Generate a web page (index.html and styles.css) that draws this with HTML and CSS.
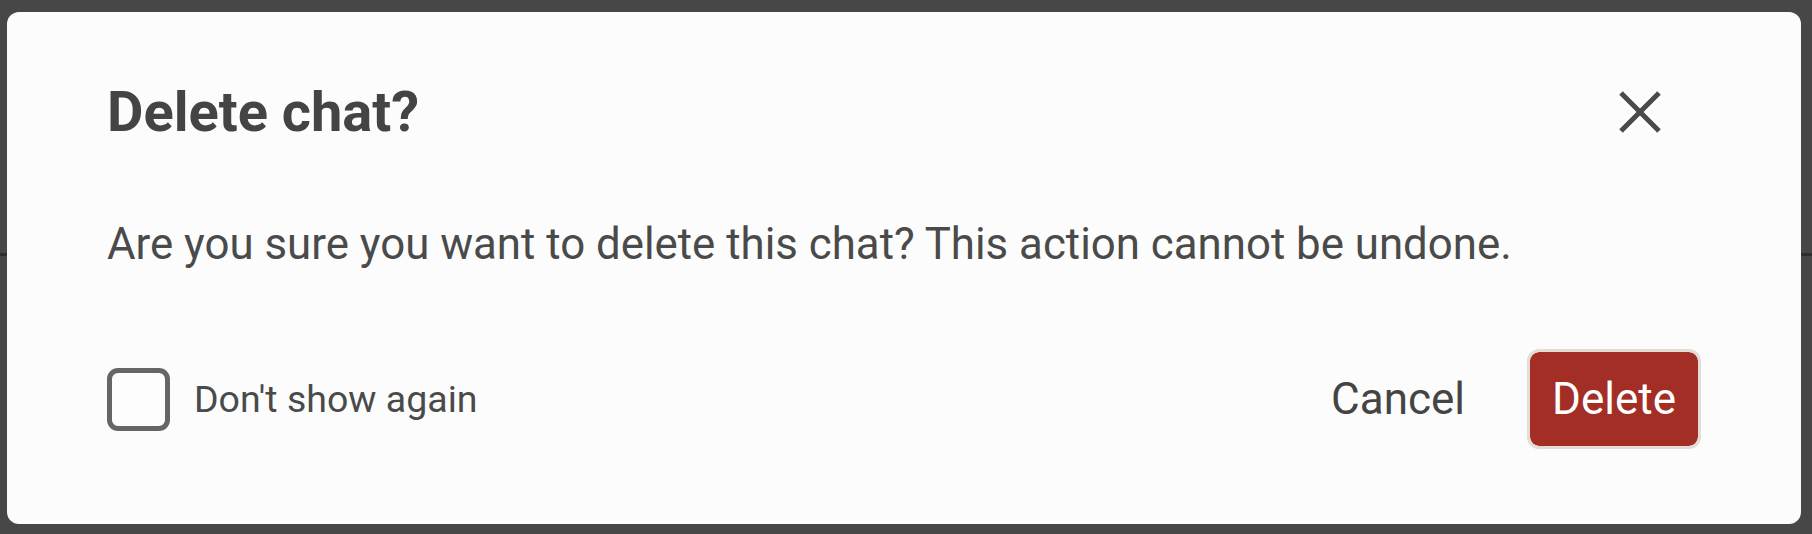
FILE: index.html
```html
<!DOCTYPE html>
<html lang="en">
<head>
<meta charset="utf-8">
<title>Delete chat?</title>
<link rel="stylesheet" href="styles.css">
</head>
<body>
<div class="page">
  <div class="page-top"></div>
</div>
<div class="overlay">
  <div class="dialog" role="dialog" aria-labelledby="dlg-title">
    <div class="dialog-header">
      <h2 class="dialog-title" id="dlg-title">Delete chat?</h2>
      <button class="close-btn" aria-label="Close">
        <svg width="44" height="44" viewBox="0 0 44 44" aria-hidden="true">
          <line x1="3" y1="3" x2="41" y2="41" stroke="#4a4a4a" stroke-width="5"/>
          <line x1="41" y1="3" x2="3" y2="41" stroke="#4a4a4a" stroke-width="5"/>
        </svg>
      </button>
    </div>
    <p class="dialog-text">Are you sure you want to delete this chat? This action cannot be undone.</p>
    <div class="dialog-footer">
      <label class="check">
        <span class="check-box"></span>
        <span class="check-label">Don't show again</span>
      </label>
      <div class="actions">
        <button class="btn-cancel">Cancel</button>
        <button class="btn-delete">Delete</button>
      </div>
    </div>
  </div>
</div>
</body>
</html>
```
FILE: styles.css
```css
html, body {
  margin: 0;
  padding: 0;
  height: 100%;
}
body {
  background: #474747;
  font-family: Roboto, "Liberation Sans", sans-serif;
  overflow: hidden;
}
.page-top {
  height: 253px;
  border-bottom: 3px solid #2e2e2e;
}
.overlay {
  position: fixed;
  inset: 0;
  padding: 12px 11px 10px 7px;
  display: flex;
}
.dialog {
  flex: 1;
  box-sizing: border-box;
  background: #fcfcfc;
  border-radius: 12px;
  padding: 0 100px;
  display: flex;
  flex-direction: column;
}
.dialog-header {
  margin-top: 60px;
  height: 80px;
  display: flex;
  align-items: center;
  justify-content: space-between;
}
.dialog-title {
  margin: 0;
  font-size: 56px;
  line-height: 80px;
  font-weight: 700;
  color: #444444;
}
.close-btn {
  border: 0;
  background: none;
  padding: 0;
  margin-right: 39px;
  width: 44px;
  height: 44px;
  display: flex;
}
.dialog-text {
  margin: 62px 0 0 0;
  font-size: 43.8px;
  line-height: 60px;
  color: #4a4a4a;
}
.dialog-footer {
  margin-top: 75px;
  height: 100px;
  display: flex;
  align-items: center;
  justify-content: space-between;
}
.check {
  display: flex;
  align-items: center;
  gap: 24px;
}
.check-box {
  width: 63px;
  height: 63px;
  box-sizing: border-box;
  border: 5px solid #666666;
  border-radius: 11px;
  background: #fdfdfd;
}
.check-label {
  font-size: 37.5px;
  color: #4a4a4a;
}
.actions {
  display: flex;
  align-items: center;
  gap: 62px;
}
.btn-cancel {
  border: 0;
  background: none;
  padding: 0;
  font-family: inherit;
  font-size: 44px;
  color: #444444;
}
.btn-delete {
  width: 174px;
  height: 100px;
  box-sizing: border-box;
  border: 3px solid #e4ddd5;
  border-radius: 12px;
  background: #a22e25;
  background-clip: padding-box;
  color: #ffffff;
  font-family: inherit;
  font-size: 44px;
  padding: 0;
}
```
